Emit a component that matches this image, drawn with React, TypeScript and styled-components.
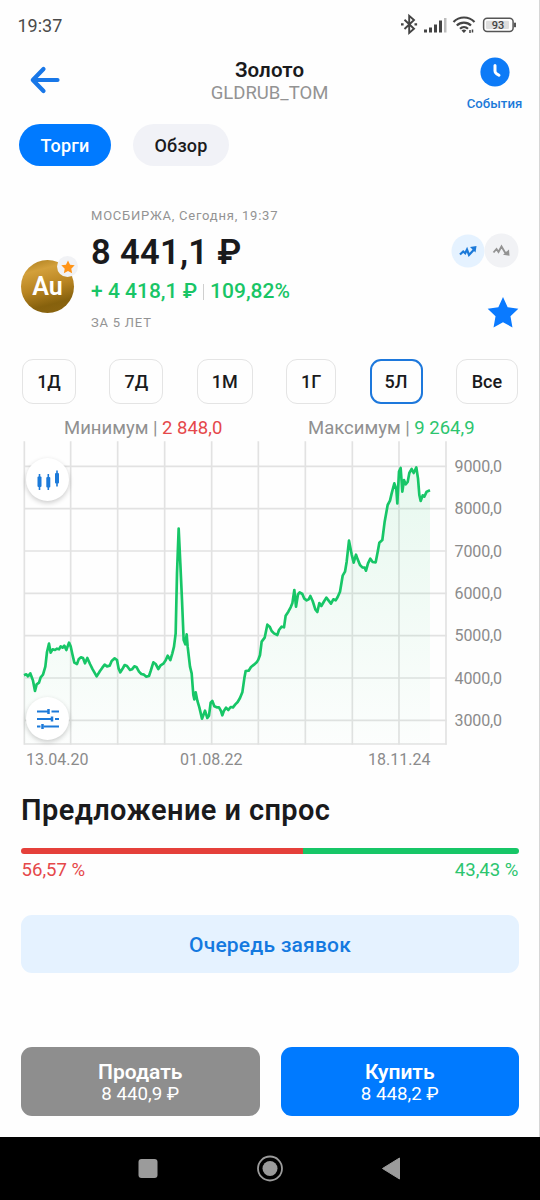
import React from 'react';
import styled, { createGlobalStyle } from 'styled-components';

const GlobalStyle = createGlobalStyle`
  *, *::before, *::after { box-sizing: border-box; }
  body { margin: 0; background: #fefefe; }
  button { font: inherit; color: inherit; background: none; border: 0; padding: 0; margin: 0; }
`;

const Screen = styled.div`
  width: 540px;
  height: 1200px;
  display: flex;
  flex-direction: column;
  font-family: Roboto, "Liberation Sans", sans-serif;
  color: #1a1a1c;
  overflow: hidden;
`;

const Content = styled.main`
  height: 1137px;
  flex: none;
  display: flex;
  flex-direction: column;
  background: #fefefe;
  box-shadow: inset -1px 0 #d6d6d6;
`;

const StatusBar = styled.div`
  height: 50px;
  padding: 0 22px 0 17.5px;
  display: flex;
  align-items: center;
  justify-content: space-between;
  font-size: 18px;
  color: #4a4a4a;
`;

const Header = styled.header`
  height: 74px;
  padding: 6px 0 0 29px;
  display: grid;
  grid-template-columns: 120px 1fr 91px;
`;

const BackButton = styled.button`
  height: 48px;
  display: flex;
  align-items: center;
`;

const TitleBlock = styled.div`
  display: flex;
  flex-direction: column;
  align-items: center;
  padding-right: 59px;
`;

const Title = styled.h1`
  margin: 2px 0 0;
  font-size: 20.5px;
  line-height: 24px;
  font-weight: 600;
  letter-spacing: 0.1px;
`;

const Ticker = styled.div`
  font-size: 18.5px;
  line-height: 23px;
  color: #939393;
`;

const Events = styled.button`
  display: flex;
  flex-direction: column;
  align-items: center;
  justify-content: flex-start;
  font-size: 13.2px;
  line-height: 16px;
  font-weight: 500;
  color: #1c7ad9;
  svg { margin: 1px 0 9px; }
`;

const Chips = styled.nav`
  display: flex;
  gap: 22px;
  padding-left: 19px;
`;

const Chip = styled.button<{ $active?: boolean; $width: number }>`
  width: ${p => p.$width}px;
  height: 42px;
  border-radius: 21px;
  font-size: 18px;
  font-weight: 500;
  letter-spacing: 0.2px;
  color: ${p => (p.$active ? '#fff' : '#1a1a1c')};
  background: ${p => (p.$active ? '#007aff' : '#f1f2f7')};
`;

const Quote = styled.section`
  height: 151px;
  margin-top: 42px;
  padding: 0 21px;
  display: grid;
  grid-template-columns: 70px 1fr 68px;
`;

const Coin = styled.div`
  position: relative;
  width: 53px;
  height: 53px;
  margin-top: 52px;
  border-radius: 50%;
  background: linear-gradient(165deg, #a87b1c 0%, #d3a03b 22%, #b98522 50%, #86610d 78%, #8d6612 100%);
  display: flex;
  align-items: center;
  justify-content: center;
  color: #fff;
  font-size: 25px;
  font-weight: 600;
`;

const CoinBadge = styled.span`
  position: absolute;
  left: 36px;
  top: -4px;
  width: 21px;
  height: 21px;
  border-radius: 50%;
  background: #f1f2f5;
  display: flex;
  align-items: center;
  justify-content: center;
`;

const Figures = styled.div`
  display: flex;
  flex-direction: column;
  align-items: flex-start;
  white-space: nowrap;
`;

const Caption = styled.div`
  font-size: 13px;
  line-height: 15px;
  letter-spacing: 0.78px;
  color: #939393;
`;

const Price = styled.div`
  margin: 8px 0 6px;
  font-size: 34.5px;
  line-height: 42px;
  font-weight: 600;
  letter-spacing: 0.3px;
`;

const Change = styled.div`
  display: flex;
  align-items: center;
  margin-bottom: 11px;
  font-size: 21px;
  line-height: 25px;
  font-weight: 500;
  color: #19c566;
`;

const Divider = styled.span`
  width: 1px;
  height: 16px;
  margin: 0 6px;
  background: #cfcfcf;
`;

const QuoteActions = styled.div`
  display: flex;
  flex-direction: column;
  align-items: flex-end;
  padding-top: 25px;
`;

const TrendPair = styled.div`
  display: flex;
  align-items: center;
  margin-bottom: 28px;
  svg + svg { margin-left: -1px; }
`;

const Periods = styled.div`
  display: flex;
  justify-content: space-between;
  padding: 0 22px;
`;

const Period = styled.button<{ $active?: boolean; $width: number }>`
  width: ${p => p.$width}px;
  height: 45px;
  border-radius: 11px;
  border: ${p => (p.$active ? '2px solid #1d78dc' : '1px solid #e4e4e4')};
  font-size: 18px;
  font-weight: 500;
`;

const Range = styled.div`
  height: 36px;
  display: flex;
  padding-left: 64px;
  font-size: 18.5px;
  line-height: 48px;
  color: #909090;
  white-space: nowrap;
`;

const RangeItem = styled.div<{ $color: string; $width: number }>`
  width: ${p => p.$width}px;
  b { font-weight: 400; color: ${p => p.$color}; }
`;

const ChartArea = styled.section`
  position: relative;
  height: 305px;
  display: flex;
  svg { display: block; flex: none; }
`;

const YAxis = styled.div`
  padding: 6px 0 0 4.5px;
  font-size: 16px;
  line-height: 42.35px;
  letter-spacing: -0.1px;
  color: #8b8b8b;
`;

const XAxis = styled.div`
  display: grid;
  grid-template-columns: 154px 188px auto;
  justify-content: start;
  padding: 5px 0 0 26px;
  font-size: 16px;
  line-height: 20px;
  color: #8b8b8b;
`;

const ChartTool = styled.button<{ $top: number }>`
  position: absolute;
  left: 26px;
  top: ${p => p.$top}px;
  width: 43px;
  height: 43px;
  border-radius: 50%;
  background: #fff;
  box-shadow: 0 2px 5px rgba(0, 0, 0, 0.2);
  display: flex;
  align-items: center;
  justify-content: center;
`;

const SectionTitle = styled.h2`
  margin: 22px 0 0 21px;
  font-size: 29px;
  line-height: 36px;
  font-weight: 600;
  letter-spacing: 0.4px;
`;

const Balance = styled.div`
  display: flex;
  height: 6px;
  margin: 20px 21px 0;
  border-radius: 3px;
  overflow: hidden;
`;

const Share = styled.span<{ $color: string; $part: number }>`
  flex: ${p => p.$part} 0 0;
  background: ${p => p.$color};
`;

const Percents = styled.div`
  display: flex;
  justify-content: space-between;
  margin: 5px 21.5px 0;
  font-size: 18.6px;
  line-height: 22px;
`;

const Percent = styled.span<{ $color: string }>`
  color: ${p => p.$color};
`;

const QueueButton = styled.button`
  flex: none;
  height: 58px;
  margin: 34px 21px 0;
  padding-top: 2px;
  border-radius: 11px;
  background: #e5f2ff;
  color: #1479e0;
  font-size: 21px;
  font-weight: 500;
  letter-spacing: 0.2px;
`;

const Trade = styled.div`
  display: flex;
  gap: 21px;
  margin: 74px 21px 0;
`;

const TradeButton = styled.button<{ $color: string }>`
  flex: 1;
  height: 69px;
  border-radius: 11px;
  background: ${p => p.$color};
  color: #fff;
  display: flex;
  flex-direction: column;
  align-items: center;
  padding-top: 13px;
  font-size: 18.7px;
  line-height: 21px;
  strong { font-size: 21px; line-height: 24px; font-weight: 600; }
`;

const SystemNav = styled.nav`
  flex: 1;
  background: #000;
  display: flex;
  justify-content: center;
`;

const StatusIcons = () => (
  <svg width="120" height="24" viewBox="0 0 120 24">
    <g fill="none" stroke="#444">
      <path d="M6.500 6.800l9.500 9-4.800 4.200V2.800l4.800 4.200-9.500 9" strokeWidth="1.900" />
      <path d="M3 11.400h2.600M16.500 11.400h2.600" strokeWidth="2.4" />
    </g>
    <g fill="#444">
      <rect x="26" y="16.500" width="3" height="3" />
      <rect x="31" y="14.500" width="3" height="5" />
      <rect x="36" y="11.500" width="3" height="8" />
      <rect x="41" y="7.500" width="3" height="12" />
      <rect x="46" y="5" width="2.500" height="14.500" fill="#bcbcbc" />
    </g>
    <g fill="none" stroke="#444" strokeWidth="2.2">
      <path d="M55.500 9a14.500 14.500 0 0 1 21 0" />
      <path d="M58.800 12.500a10 10 0 0 1 14.200 0" />
      <path d="M62 15.800a5.800 5.800 0 0 1 8 0" />
    </g>
    <path d="M63.500 17.600a3.600 3.600 0 0 1 4.800 0L65.900 20z" fill="#444" />
    <path d="M72 20v-3M74.500 16.500v3" stroke="#444" strokeWidth="1.5" />
    <rect x="85.600" y="5.300" width="29.500" height="13.200" rx="3.500" fill="none" stroke="#555" strokeWidth="1.5" />
    <rect x="88" y="7.700" width="23" height="8.400" rx="1" fill="#dedede" />
    <rect x="116" y="9.700" width="2" height="4.500" fill="#555" />
    <text x="100" y="16" textAnchor="middle" fontFamily="Roboto, sans-serif" fontSize="11" fontWeight="500" fill="#444">93</text>
  </svg>
);

const STAR = 'M12 .8l3.500 7.400 8 1-5.900 5.600 1.500 8.100L12 19l-7.100 3.900 1.500-8.100L.5 9.200l8-1z';

const gridX = [73, 212, 353, 494, 635, 775, 916, 1057, 1197, 1338];
const gridY = [79, 206, 333, 460, 587, 714, 841, 912];

const series =
  '72,706 79,703 84,709 91,700 95,711 99,722 105,753 110,733 117,728 122,712 129,704 136,680 141,636 147,611 152,638 158,628 165,630 171,626 177,628 182,619 188,623 193,617 199,630 207,608 212,619 217,642 223,668 231,672 236,658 243,652 249,654 255,670 262,654 270,672 278,688 290,709 300,693 307,683 314,674 321,679 329,677 335,663 344,655 351,660 356,686 361,697 369,684 374,675 381,678 390,690 396,688 403,679 410,682 417,695 424,702 432,704 439,710 447,708 452,693 460,667 467,672 475,687 482,676 490,671 497,661 503,647 511,660 517,640 522,620 527,580 531,400 536,266 541,370 546,480 551,600 556,613 560,583 563,620 570,680 575,700 580,765 583,778 587,757 592,782 598,802 606,836 615,812 622,834 627,827 632,788 637,783 643,799 650,802 657,802 663,813 667,826 672,812 678,803 685,810 692,801 699,802 706,793 713,786 720,774 727,757 733,715 737,693 746,692 753,681 762,674 770,667 775,659 780,645 785,605 794,593 802,554 809,560 815,573 822,580 832,585 837,570 845,560 852,562 857,527 865,515 872,502 877,490 883,450 888,500 894,463 899,457 907,462 913,476 920,481 926,478 931,468 938,483 946,508 952,516 958,489 964,498 971,486 979,473 986,482 993,491 1000,478 1007,481 1013,471 1020,455 1028,407 1035,395 1040,365 1047,302 1055,343 1061,368 1068,344 1073,358 1080,375 1087,382 1094,383 1098,392 1104,370 1111,356 1118,366 1127,367 1133,336 1138,308 1147,300 1154,245 1163,195 1170,182 1175,160 1183,130 1189,148 1192,190 1197,95 1202,84 1207,155 1212,120 1217,133 1223,126 1228,99 1235,87 1241,99 1249,82 1254,115 1258,165 1262,183 1268,166 1273,170 1280,155 1290,151';

const PriceChart = () => (
  <svg width="450" height="305" viewBox="0 0 1350 915">
    <defs>
      <linearGradient id="area" x1="0" y1="80" x2="0" y2="912" gradientUnits="userSpaceOnUse">
        <stop offset="0" stopColor="#19c566" stopOpacity=".1" />
        <stop offset="1" stopColor="#19c566" stopOpacity=".01" />
      </linearGradient>
    </defs>
    <g stroke="#e2e2e2" strokeWidth="5">
      {gridX.map(x => <line key={x} x1={x} x2={x} y1="4" y2="914" />)}
      {gridY.map(y => <line key={y} x1="73" x2="1340" y1={y} y2={y} />)}
    </g>
    <polygon points={`72,912 ${series} 1290,912`} fill="url(#area)" />
    <polyline points={series} fill="none" stroke="#17c667" strokeWidth="8" strokeLinejoin="round" />
  </svg>
);

const periods = [
  { label: '1Д', width: 54 },
  { label: '7Д', width: 54 },
  { label: '1М', width: 56 },
  { label: '1Г', width: 50 },
  { label: '5Л', width: 53, active: true },
  { label: 'Все', width: 62 },
];

const levels = ['9000,0', '8000,0', '7000,0', '6000,0', '5000,0', '4000,0', '3000,0'];

export default function App() {
  return (
    <Screen>
      <GlobalStyle />
      <Content>
        <StatusBar>
          <span>19:37</span>
          <StatusIcons />
        </StatusBar>

        <Header>
          <BackButton aria-label="Назад">
            <svg width="32" height="28" viewBox="0 0 32 28" fill="none" stroke="#1877e8" strokeWidth="4.2" strokeLinecap="round" strokeLinejoin="round">
              <path d="M28.500 14H4M14.500 3L3.800 14l10.700 11" />
            </svg>
          </BackButton>
          <TitleBlock>
            <Title>Золото</Title>
            <Ticker>GLDRUB_TOM</Ticker>
          </TitleBlock>
          <Events>
            <svg width="30" height="30" viewBox="0 0 30 30">
              <circle cx="15" cy="15" r="14.600" fill="#0d7bf7" />
              <path d="M15 8.500V14q0 1.800 1.500 2.700L19 18.200" fill="none" stroke="#fff" strokeWidth="3" strokeLinecap="round" />
            </svg>
            События
          </Events>
        </Header>

        <Chips>
          <Chip $active $width={92}>Торги</Chip>
          <Chip $width={96}>Обзор</Chip>
        </Chips>

        <Quote>
          <Coin>
            Au
            <CoinBadge>
              <svg width="14" height="14" viewBox="0 0 24 24"><path d={STAR} fill="#ff9417" /></svg>
            </CoinBadge>
          </Coin>
          <Figures>
            <Caption>МОСБИРЖА, Сегодня, 19:37</Caption>
            <Price>8 441,1 ₽</Price>
            <Change>
              + 4 418,1 ₽<Divider />109,82%
            </Change>
            <Caption>ЗА 5 ЛЕТ</Caption>
          </Figures>
          <QuoteActions>
            <TrendPair>
              <svg width="34" height="34" viewBox="0 0 34 34">
                <circle cx="17" cy="17" r="16.500" fill="#e5f2ff" />
                <path d="M9 20.500l3.200-3 2 1.800 1.800-3.800 2 5.500 5.500-6" fill="none" stroke="#1c7ad9" strokeWidth="2.2" />
                <path d="M19 13l6.500-1-1 6.500z" fill="#1c7ad9" />
              </svg>
              <svg width="35" height="35" viewBox="0 0 35 35">
                <circle cx="17.500" cy="17.500" r="17" fill="#f1f2f5" />
                <path d="M9.500 19.500l3-3.500 2 3 3-5.500 3.500 6 2 .500" fill="none" stroke="#939393" strokeWidth="1.9" />
                <path d="M25 16.500l.5 6.300-6.500-1z" fill="#939393" />
              </svg>
            </TrendPair>
            <svg width="32" height="33" viewBox="0 0 24 24" preserveAspectRatio="none"><path d={STAR} fill="#0a7aff" /></svg>
          </QuoteActions>
        </Quote>

        <Periods>
          {periods.map(p => (
            <Period key={p.label} $width={p.width} $active={p.active}>{p.label}</Period>
          ))}
        </Periods>

        <Range>
          <RangeItem $color="#e5484a" $width={244}>Минимум | <b>2 848,0</b></RangeItem>
          <RangeItem $color="#2cc56f" $width={180}>Максимум | <b>9 264,9</b></RangeItem>
        </Range>

        <ChartArea>
          <PriceChart />
          <YAxis>
            {levels.map(l => <div key={l}>{l}</div>)}
          </YAxis>
          <ChartTool $top={18} aria-label="Свечи">
            <svg width="24" height="22" viewBox="0 0 24 22" fill="#1c7ad9">
              <rect x="1.500" y="7.500" width="4" height="10.500" rx="1" /><rect x="2.700" y="5" width="1.600" height="16" />
              <rect x="10.300" y="8" width="4" height="10.500" rx="1" /><rect x="11.500" y="5" width="1.600" height="16" />
              <rect x="19" y="4" width="4" height="10.500" rx="1" /><rect x="20.200" y="1.500" width="1.600" height="16" />
            </svg>
          </ChartTool>
          <ChartTool $top={257} aria-label="Настройки">
            <svg width="22" height="20" viewBox="0 0 22 20" fill="none" stroke="#1c7ad9" strokeWidth="1.9">
              <path d="M0 2.500h12M14.500 2.500H22M0 10h15M18 10h4M0 17.500h3.500M6.500 17.500H22" />
              <path d="M11.500 0v5M15 7.500v5M5.500 15v5" strokeWidth="2.5" />
            </svg>
          </ChartTool>
        </ChartArea>

        <XAxis>
          <span>13.04.20</span>
          <span>01.08.22</span>
          <span>18.11.24</span>
        </XAxis>

        <SectionTitle>Предложение и спрос</SectionTitle>
        <Balance>
          <Share $color="#e5403a" $part={56.57} />
          <Share $color="#17c667" $part={43.43} />
        </Balance>
        <Percents>
          <Percent $color="#e5484a">56,57 %</Percent>
          <Percent $color="#2cc56f">43,43 %</Percent>
        </Percents>

        <QueueButton>Очередь заявок</QueueButton>

        <Trade>
          <TradeButton $color="#8e8e8e"><strong>Продать</strong>8 440,9 ₽</TradeButton>
          <TradeButton $color="#007aff"><strong>Купить</strong>8 448,2 ₽</TradeButton>
        </Trade>
      </Content>

      <SystemNav>
        <svg width="270" height="63" viewBox="0 0 270 63" fill="#9b9b9b">
          <rect x="3.500" y="22" width="19" height="19" rx="3" />
          <circle cx="135" cy="31.500" r="12" fill="none" stroke="#9b9b9b" strokeWidth="1.8" />
          <circle cx="135" cy="31.500" r="7.500" />
          <path d="M247.500 31.500L264.500 21v21z" stroke="#9b9b9b" strokeWidth="1" strokeLinejoin="round" />
        </svg>
      </SystemNav>
    </Screen>
  );
}
